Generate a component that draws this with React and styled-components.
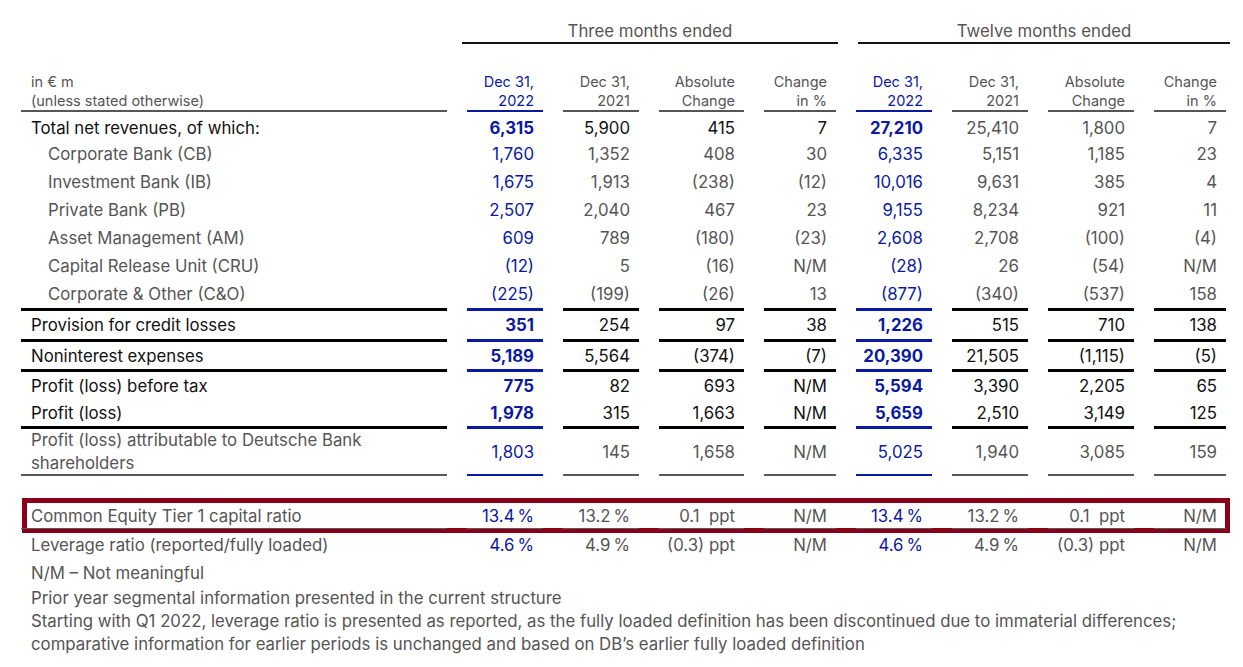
import React from "react";
import styled, { createGlobalStyle, css } from "styled-components";

const BLUE = "#0a1aa0";
const GRAY = "#555555";
const INK = "#111111";
const RED = "#8a0018";
const FS = "16.8px";

const Global = createGlobalStyle`
  html, body { margin: 0; padding: 0; background: #ffffff; }
  body {
    font-family: Inter, "Noto Sans", "Liberation Sans", sans-serif;
    -webkit-font-smoothing: antialiased;
  }
`;

const COLS = "426px 76px 76px 85px 72px 76px 76px 86px 72px";

const Page = styled.div`
  width: 1243px;
  height: 667px;
  overflow: hidden;
  padding-left: 21px;
  box-sizing: border-box;
`;

const Grid = styled.div`
  display: grid;
  grid-template-columns: ${COLS};
  column-gap: 20px;
  width: 1205px;
`;

const GroupRow = styled(Grid)``;

const GroupTitle = styled.div`
  grid-column: ${(p) => p.$col} / span 4;
  margin: ${(p) => p.$margin};
  padding-top: 20px;
  line-height: 22px;
  font-size: 16.8px;
  color: ${GRAY};
  text-align: center;
  border-bottom: 2px solid ${INK};
`;

const HeadRow = styled(Grid)`
  margin-top: 27.5px;
`;

const HeadCell = styled.div`
  font-size: 14.5px;
  line-height: 19px;
  color: ${(p) => (p.$hl ? BLUE : GRAY)};
  text-align: ${(p) => (p.$label ? "left" : "right")};
  padding: ${(p) => (p.$label ? "0 0 0 10px" : "0 9px 0 0")};
  border-bottom: 2px solid ${(p) => (p.$hl ? BLUE : GRAY)};
  display: flex;
  flex-direction: column;
  justify-content: flex-end;
`;

const ruleCss = (rule, hl) => {
  if (rule === "thick") return css`border-bottom: 3px solid ${hl ? BLUE : "#000"};`;
  if (rule === "thin") return css`border-bottom: 2px solid ${hl ? BLUE : "#5a5a5a"};`;
  if (rule === "hair") return css`border-bottom: 1.5px solid #5a5a5a;`;
  return css``;
};

const Row = styled(Grid)`
  margin-top: ${(p) => p.$mt || 0}px;
`;

/* text sits 1px lower than the centre of its row, as in the source */
const Label = styled.div`
  box-sizing: content-box;
  height: ${(p) => p.$h - 1}px;
  padding-top: ${(p) => (p.$pt || 0) + 1}px;
  padding-left: ${(p) => (p.$indent ? 27 : 10)}px;
  font-size: ${FS};
  line-height: ${(p) => (p.$lh ? p.$lh : p.$h - 1)}px;
  color: ${(p) => (p.$tone === "main" ? INK : GRAY)};
  display: flex;
  align-items: center;
  position: relative;
  ${(p) => ruleCss(p.$rule, false)}
`;

const Num = styled.div`
  box-sizing: content-box;
  height: ${(p) => p.$h - 1}px;
  padding-top: ${(p) => (p.$pt || 0) + 1}px;
  padding-right: 9px;
  font-size: ${FS};
  line-height: ${(p) => p.$h - 1}px;
  white-space: pre;
  color: ${(p) => (p.$hl ? BLUE : p.$tone === "main" ? INK : GRAY)};
  font-weight: ${(p) => (p.$hl && p.$tone === "main" ? 700 : 400)};
  display: flex;
  align-items: center;
  justify-content: flex-end;
  position: relative;
  ${(p) => ruleCss(p.$rule, p.$hl)}
`;

const BoxedRow = styled(Row)`
  position: relative;
  &::before {
    content: "";
    position: absolute;
    top: -5px;
    bottom: -4px;
    left: 1px;
    right: -4px;
    border: 5px solid ${RED};
  }
`;

const Notes = styled.div`
  margin-top: 5px;
  padding-left: 10px;
  font-size: ${FS};
  line-height: 22.5px;
  color: ${GRAY};
`;

const Note = styled.p`
  margin: ${(p) => p.$gap || 0}px 0 0;
`;

const HL = [true, false, false, false, true, false, false, false];

const rows = [
  { label: "Total net revenues, of which:", tone: "main", h: 24, pt: 4, twelveTone: "sub",
    v: ["6,315", "5,900", "415", "7", "27,210", "25,410", "1,800", "7"] },
  { label: "Corporate Bank (CB)", tone: "sub", indent: true, h: 28,
    v: ["1,760", "1,352", "408", "30", "6,335", "5,151", "1,185", "23"] },
  { label: "Investment Bank (IB)", tone: "sub", indent: true, h: 28,
    v: ["1,675", "1,913", "(238)", "(12)", "10,016", "9,631", "385", "4"] },
  { label: "Private Bank (PB)", tone: "sub", indent: true, h: 28,
    v: ["2,507", "2,040", "467", "23", "9,155", "8,234", "921", "11"] },
  { label: "Asset Management (AM)", tone: "sub", indent: true, h: 28,
    v: ["609", "789", "(180)", "(23)", "2,608", "2,708", "(100)", "(4)"] },
  { label: "Capital Release Unit (CRU)", tone: "sub", indent: true, h: 28,
    v: ["(12)", "5", "(16)", "N/M", "(28)", "26", "(54)", "N/M"] },
  { label: "Corporate & Other (C&O)", tone: "sub", indent: true, h: 28, rule: "thick",
    v: ["(225)", "(199)", "(26)", "13", "(877)", "(340)", "(537)", "158"] },
  { label: "Provision for credit losses", tone: "main", h: 28, rule: "thick",
    v: ["351", "254", "97", "38", "1,226", "515", "710", "138"] },
  { label: "Noninterest expenses", tone: "main", h: 27, rule: "thick",
    v: ["5,189", "5,564", "(374)", "(7)", "20,390", "21,505", "(1,115)", "(5)"] },
  { label: "Profit (loss) before tax", tone: "main", h: 27,
    v: ["775", "82", "693", "N/M", "5,594", "3,390", "2,205", "65"] },
  { label: "Profit (loss)", tone: "main", h: 27, rule: "thick",
    v: ["1,978", "315", "1,663", "N/M", "5,659", "2,510", "3,149", "125"] },
  { label: "Profit (loss) attributable to Deutsche Bank shareholders", tone: "muted", h: 45, lh: 23, rule: "thin",
    v: ["1,803", "145", "1,658", "N/M", "5,025", "1,940", "3,085", "159"] },
];

const cet1 = ["13.4\u2009%", "13.2\u2009%", "0.1  ppt", "N/M", "13.4\u2009%", "13.2\u2009%", "0.1  ppt", "N/M"];
const leverage = ["4.6\u2009%", "4.9\u2009%", "(0.3) ppt", "N/M", "4.6\u2009%", "4.9\u2009%", "(0.3) ppt", "N/M"];

function Cells({ values, tone, h, pt, rule, twelveTone }) {
  return values.map((val, i) => (
    <Num
      key={i}
      $hl={HL[i]}
      $tone={i >= 5 && twelveTone ? twelveTone : tone}
      $h={h}
      $pt={pt}
      $rule={rule}
    >
      {val}
    </Num>
  ));
}

export default function App() {
  return (
    <>
      <Global />
      <Page>
        <GroupRow>
          <GroupTitle $col={2} $margin="0 -2px 0 -5px">Three months ended</GroupTitle>
          <GroupTitle $col={6} $margin="0 -4px 0 2px">Twelve months ended</GroupTitle>
        </GroupRow>

        <HeadRow>
          <HeadCell $label>
            <span>in € m</span>
            <span>(unless stated otherwise)</span>
          </HeadCell>
          {[0, 1].map((g) => (
            <React.Fragment key={g}>
              <HeadCell $hl>
                <span>Dec 31,</span>
                <span>2022</span>
              </HeadCell>
              <HeadCell>
                <span>Dec 31,</span>
                <span>2021</span>
              </HeadCell>
              <HeadCell>
                <span>Absolute</span>
                <span>Change</span>
              </HeadCell>
              <HeadCell>
                <span>Change</span>
                <span>in %</span>
              </HeadCell>
            </React.Fragment>
          ))}
        </HeadRow>

        {rows.map((r) => (
          <Row key={r.label}>
            <Label
              $h={r.h}
              $pt={r.pt}
              $lh={r.lh}
              $indent={r.indent}
              $tone={r.tone}
              $rule={r.rule}
            >
              <span>{r.label}</span>
            </Label>
            <Cells values={r.v} tone={r.tone} h={r.h} pt={r.pt} rule={r.rule} twelveTone={r.twelveTone} />
          </Row>
        ))}

        <BoxedRow $mt={27}>
          <Label $h={25} $tone="muted" $rule="hair">Common Equity Tier 1 capital ratio</Label>
          <Cells values={cet1} tone="muted" h={25} rule="hair" />
        </BoxedRow>

        <Row $mt={4}>
          <Label $h={24} $tone="muted">Leverage ratio (reported/fully loaded)</Label>
          <Cells values={leverage} tone="muted" h={24} />
        </Row>

        <Notes>
          <Note>N/M – Not meaningful</Note>
          <Note $gap={2.5}>Prior year segmental information presented in the current structure</Note>
          <Note $gap={1}>
            Starting with Q1 2022, leverage ratio is presented as reported, as the fully loaded definition has been discontinued due to immaterial differences;
            <br />
            comparative information for earlier periods is unchanged and based on DB’s earlier fully loaded definition
          </Note>
        </Notes>
      </Page>
    </>
  );
}
